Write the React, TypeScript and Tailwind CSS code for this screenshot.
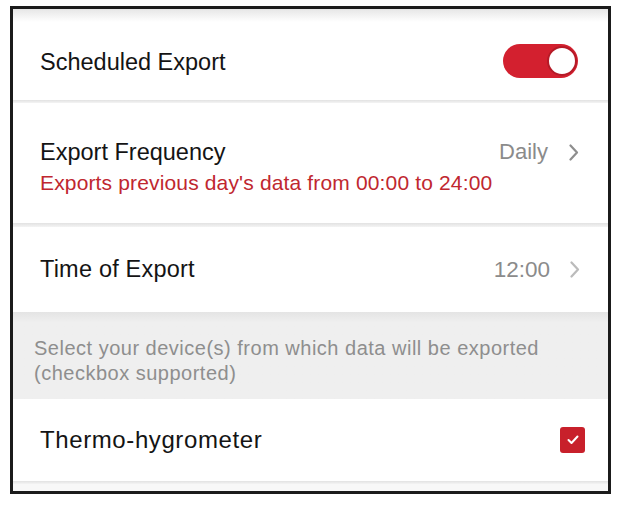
import React from 'react'

const font = { fontFamily: '"Liberation Sans", Arial, sans-serif' }

const Chevron = ({ faded }: { faded?: boolean }) => (
  <svg width="11" height="17" viewBox="0 0 11 17" className={faded ? 'opacity-60' : ''}>
    <polyline points="2.5,1.5 9,8.5 2.5,15.5" fill="none" stroke="#8e8e8e" strokeWidth="2.2" strokeLinecap="round" strokeLinejoin="round" />
  </svg>
)

const Toggle = () => (
  <div className="flex h-[34px] w-[75px] items-center justify-end rounded-full bg-[#d3202f] pr-[1px]">
    <div className="h-[30px] w-[30px] rounded-full border-2 border-[#b51a27] bg-white" />
  </div>
)

const Checkbox = () => (
  <div className="flex h-[26px] w-[25px] items-center justify-center rounded-[3px] bg-[#c8202b]">
    <svg width="12" height="10" viewBox="0 0 12 10">
      <polyline points="1.5,5 4.5,8 10.5,1.5" fill="none" stroke="white" strokeWidth="2" strokeLinecap="round" strokeLinejoin="round" />
    </svg>
  </div>
)

const Divider = ({ h }: { h: string }) => (
  <div className={`${h} w-full bg-gradient-to-b from-[#e2e2e2] to-[#f4f4f4]`} />
)

export default function App() {
  return (
    <div className="min-h-screen w-full bg-white pl-[10px] pt-[6px]" style={font}>
      <div className="flex h-[488px] w-[601px] flex-col border-[3px] border-[#1b1b1b] bg-white">
        <div className="h-[13px] w-full bg-gradient-to-b from-[#e6e6e6] to-white" />

        <div className="flex h-[78px] items-center justify-between pl-[27px] pr-[30px]">
          <span className="pt-[3px] text-[23.5px] text-[#141414]">Scheduled Export</span>
          <Toggle />
        </div>

        <Divider h="h-[3px]" />

        <div className="flex h-[120px] flex-col pl-[27px] pr-[29px] pt-[35px]">
          <div className="flex items-center justify-between">
            <span className="text-[23.5px] leading-[28px] text-[#141414]">Export Frequency</span>
            <div className="flex items-center gap-[20px]">
              <span className="text-[22px] leading-[28px] text-[#8b8b8b]">Daily</span>
              <Chevron />
            </div>
          </div>
          <span className="mt-[3px] text-[21px] leading-[28px] tracking-[0.15px] text-[#c0272f]">
            Exports previous day's data from 00:00 to 24:00
          </span>
        </div>

        <Divider h="h-[4px]" />

        <div className="flex h-[85px] items-center justify-between pl-[27px] pr-[28px]">
          <span className="text-[23.5px] tracking-[0.2px] text-[#141414]">Time of Export</span>
          <div className="flex items-center gap-[19px]">
            <span className="text-[22.5px] text-[#8b8b8b]">12:00</span>
            <Chevron faded />
          </div>
        </div>

        <div className="h-[87px] bg-gradient-to-b from-[#e4e4e4] via-[#efefef] via-[12%] to-[#efefef] pl-[21px] pt-[24px]">
          <p className="text-[20px] leading-[25px] tracking-[0.5px] text-[#8e8e8e]">
            Select your device(s) from which data will be exported
            <br />
            (checkbox supported)
          </p>
        </div>

        <div className="flex h-[82px] items-center justify-between pl-[27px] pr-[23px]">
          <span className="text-[24px] tracking-[0.6px] text-[#141414]">Thermo-hygrometer</span>
          <Checkbox />
        </div>

        <Divider h="h-[3px]" />
        <div className="flex-1 bg-[#f8f8f8]" />
      </div>
    </div>
  )
}
